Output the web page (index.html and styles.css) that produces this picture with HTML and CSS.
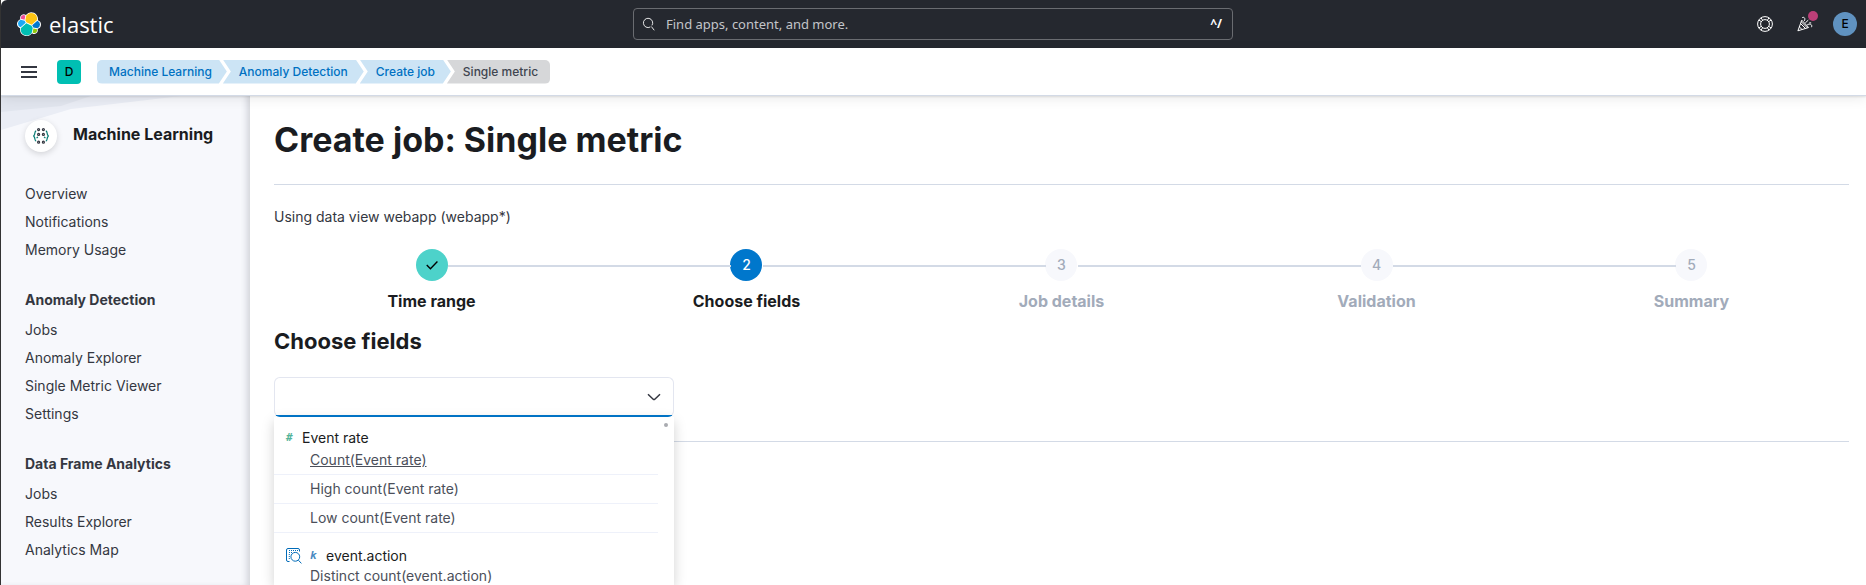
FILE: index.html
```html
<!DOCTYPE html>
<html lang="en">
<head>
<meta charset="utf-8">
<title>Create job: Single metric - Elastic</title>
<link rel="stylesheet" href="styles.css">
</head>
<body>
<header class="topbar">
  <a class="brand" href="#">
    <svg class="brand-mark" viewBox="0 0 32 32" aria-hidden="true">
      <path fill="#fff" d="M32 16.77a6.334 6.334 0 0 0-1.14-3.63 6.269 6.269 0 0 0-3.02-2.3 9.14 9.14 0 0 0-.86-5.65A9.047 9.047 0 0 0 22.73 1.1a9.01 9.01 0 0 0-10.8 3.03 4.81 4.81 0 0 0-5.8-.04 4.85 4.85 0 0 0-1.65 5.6A6.39 6.39 0 0 0 1.36 12 6.392 6.392 0 0 0 1.15 19.3a6.36 6.36 0 0 0 3.04 2.3 9.05 9.05 0 0 0 5.1 9.75 9.05 9.05 0 0 0 10.72-3.03 4.786 4.786 0 0 0 5.78.06 4.85 4.85 0 0 0 1.66-5.58A6.4 6.4 0 0 0 32 16.77z"/>
      <path fill="#FEC514" d="M12.58 13.79l7 3.19 7.07-6.19a7.77 7.77 0 0 0 .15-1.57 7.91 7.91 0 0 0-14.45-4.46l-1.18 6.09z"/>
      <path fill="#00BFB3" d="M5.33 21.22a7.9 7.9 0 0 0 14.5 6.05l1.17-6.07-1.56-2.97-7.03-3.2z"/>
      <path fill="#F04E98" d="M5.29 9.08l4.8 1.14 1.05-5.46a3.79 3.79 0 0 0-5.85 4.32z"/>
      <path fill="#1BA9F5" d="M4.87 10.22a5.36 5.36 0 0 0-.06 10.1l6.74-6.09-1.24-2.64z"/>
      <path fill="#93C90E" d="M20.87 27.27a3.77 3.77 0 0 0 5.83-4.31L21.91 21.84z"/>
      <path fill="#0077CC" d="M21.85 20.56l5.27 1.24a5.36 5.36 0 0 0 .06-10.1l-6.9 6.04z"/>
    </svg>
    <span class="brand-name">elastic</span>
  </a>
  <label class="search">
    <svg class="icon" viewBox="0 0 16 16" aria-hidden="true"><path d="M9.5 11.4A5.3 5.3 0 1 1 11.4 9.6M10.7 10.9l3.3 4.3"/></svg>
    <input type="text" aria-label="Find apps, content, and more." placeholder="Find apps, content, and more.">
    <span class="shortcut">^/</span>
  </label>
  <div class="top-actions">
    <button class="icon-button" type="button" aria-label="Help">
      <svg class="icon" viewBox="0 0 16 16" aria-hidden="true"><circle cx="8" cy="8" r="7.4"/><circle cx="8" cy="8" r="4.4"/><path d="M11.6 10.3l2.5 1.6M10.3 11.6l1.6 2.5M4.4 10.3l-2.5 1.6M5.7 11.6l-1.6 2.5M11.6 5.7l2.5-1.6M10.3 4.4l1.6-2.5M4.4 5.7L1.9 4.1M5.7 4.4L4.1 1.9"/></svg>
    </button>
    <button class="icon-button" type="button" aria-label="News">
      <svg class="icon" viewBox="0 0 16 16" aria-hidden="true"><path d="M4.8 4.2L.9 14.8l10.7-3.3zM3.6 7.6l4.8 4.8M2.4 10.9l2.6 2.6M4.3 5.8l6.1 6.1M5.2 1.6c2-1 3.5.8 2.1 3.3M8.3 6.9l3-2.8M10.2 8.9c2.4-1.7 5.5-.5 4.3 2.3M12.2 6.9h2"/></svg>
      <span class="news-dot"></span>
    </button>
    <button class="avatar" type="button" aria-label="Account">E</button>
  </div>
</header>
<div class="navbar">
  <button class="menu-button" type="button" aria-label="Menu"><span></span><span></span><span></span></button>
  <button class="space" type="button">D</button>
  <nav class="crumbs" aria-label="Breadcrumbs">
    <a class="crumb" href="#">Machine Learning</a>
    <a class="crumb" href="#">Anomaly Detection</a>
    <a class="crumb" href="#">Create job</a>
    <span class="crumb current">Single metric</span>
  </nav>
</div>
<div class="layout">
  <aside class="sidebar">
    <svg class="backdrop" viewBox="0 0 249 36" aria-hidden="true"><path fill="#eaedf5" d="M0 0h180L70 13 0 34z"/><path fill="#e1e5ee" d="M0 0h90L60 10 0 16z"/></svg>
    <div class="solution">
      <span class="solution-icon">
        <svg viewBox="0 0 16 16" aria-hidden="true"><g fill="none" stroke="#007871" stroke-width="1.2"><path d="M3.2 2.8C1.5 3.2 2.2 5.3 1.5 6.6L.7 8l.8 1.4c.7 1.3 0 3.4 1.7 3.8M12.8 2.8c1.7.4 1 2.5 1.7 3.8l.8 1.4-.8 1.4c-.7 1.3 0 3.4-1.7 3.8M3.6 10.2l1.3-1.4M12.4 10.2l-1.3-1.4"/></g><g fill="none" stroke="#343741" stroke-width="1.2"><circle cx="5.6" cy="1.6" r="1"/><circle cx="10.4" cy="1.6" r="1"/><circle cx="5.6" cy="6.4" r="1"/><circle cx="10.4" cy="6.4" r="1"/><circle cx="5.6" cy="14.2" r="1"/><circle cx="10.4" cy="14.2" r="1"/></g></svg>
      </span>
      <h2>Machine Learning</h2>
    </div>
    <nav class="side-nav" aria-label="Machine Learning">
      <section>
        <a href="#">Overview</a>
        <a href="#">Notifications</a>
        <a href="#">Memory Usage</a>
      </section>
      <section>
        <h3>Anomaly Detection</h3>
        <a href="#">Jobs</a>
        <a href="#">Anomaly Explorer</a>
        <a href="#">Single Metric Viewer</a>
        <a href="#">Settings</a>
      </section>
      <section>
        <h3>Data Frame Analytics</h3>
        <a href="#">Jobs</a>
        <a href="#">Results Explorer</a>
        <a href="#">Analytics Map</a>
      </section>
    </nav>
  </aside>
  <main class="content">
    <h1>Create job: Single metric</h1>
    <hr>
    <p class="data-view">Using data view webapp (webapp*)</p>
    <ol class="steps">
      <li class="step done"><button type="button"><span class="dot"><svg viewBox="0 0 16 16" aria-hidden="true"><path d="M2 8l4.2 4.2L14.2 4"/></svg></span>Time range</button></li>
      <li class="step active"><button type="button"><span class="dot">2</span>Choose fields</button></li>
      <li class="step"><button type="button" disabled><span class="dot">3</span>Job details</button></li>
      <li class="step"><button type="button" disabled><span class="dot">4</span>Validation</button></li>
      <li class="step"><button type="button" disabled><span class="dot">5</span>Summary</button></li>
    </ol>
    <h2>Choose fields</h2>
    <div class="combo">
      <div class="combo-box">
        <input type="text" role="combobox" aria-label="Field" aria-expanded="true" aria-controls="field-options">
        <svg viewBox="0 0 16 16" aria-hidden="true"><path d="M2 5.2l5.2 5a1.2 1.2 0 0 0 1.6 0l5.2-5"/></svg>
      </div>
      <div class="options" id="field-options" role="listbox" aria-label="Fields">
        <div class="group"><span class="token number">#</span>Event rate</div>
        <div class="option focused" role="option" aria-selected="true"><span>Count(Event rate)</span></div>
        <div class="option" role="option" aria-selected="false">High count(Event rate)</div>
        <div class="option" role="option" aria-selected="false">Low count(Event rate)</div>
        <div class="group spaced">
          <svg class="inspect" viewBox="0 0 16 16" aria-hidden="true"><path d="M3.5 13.5H2A1.5 1.5 0 0 1 .5 12V2A1.5 1.5 0 0 1 2 .5h10A1.5 1.5 0 0 1 13.5 2v1.5M12.4 12.2l3 3.2"/><circle cx="9.3" cy="8.8" r="4.4"/><path class="dots" d="M3 2.5h9M3 4.5h4M2.8 6.5h2M2.8 8.5h1M2.8 10.5h2"/></svg>
          <span class="token keyword">k</span>event.action
        </div>
        <div class="option" role="option" aria-selected="false">Distinct count(event.action)</div>
      </div>
      <span class="scroll-dot"></span>
    </div>
    <hr class="form-end">
  </main>
</div>
</body>
</html>
```
FILE: styles.css
```css
* { box-sizing: border-box; }
html, body { height: 100%; }
body {
  margin: 0;
  display: flex;
  flex-direction: column;
  overflow: hidden;
  border-left: 1px solid #333;
  background: #fff;
  color: #343741;
  font: 14px/20px Inter, sans-serif;
}
button, input { font: inherit; color: inherit; border: 0; padding: 0; background: none; }
a { color: inherit; text-decoration: none; }
h1, h2, h3, p, ol { margin: 0; padding: 0; }

.topbar {
  flex: none;
  display: grid;
  grid-template-columns: 1fr minmax(200px, 600px) 1fr;
  align-items: center;
  height: 48px;
  padding: 0 9px 0 16px;
  border-top-left-radius: 6px;
  background: #25282f;
  color: #fff;
}
.brand { display: flex; align-items: center; gap: 8px; }
.brand-mark { width: 24px; height: 24px; }
.brand-name { font: 400 22px/28px "Open Sans", sans-serif; }
.search {
  display: flex;
  align-items: center;
  gap: 10px;
  height: 32px;
  margin: 0 4px 0 -4px;
  padding: 0 10px 0 8px;
  border: 1px solid #6a6c71;
  border-radius: 4px;
  font-family: "Noto Sans", sans-serif;
  font-size: 13px;
}
.search input { flex: 1; min-width: 0; outline: 0; }
.search input::placeholder { color: #c3c5c9; opacity: 1; }
.shortcut { font-size: 12px; font-weight: 700; }
.icon { display: block; width: 16px; height: 16px; fill: none; stroke: currentColor; }
.search .icon { width: 14px; height: 14px; }
.top-actions { display: flex; justify-content: flex-end; align-items: center; }
.icon-button { position: relative; display: grid; place-items: center; width: 40px; height: 40px; }
.news-dot { position: absolute; top: 7px; right: 7px; width: 10px; height: 10px; border-radius: 50%; background: #bc3f78; }
.avatar { width: 24px; height: 24px; margin-left: 8px; border-radius: 50%; background: #6092c0; color: #000; font-size: 12px; font-weight: 500; }

.navbar {
  position: relative;
  z-index: 2;
  flex: none;
  display: flex;
  align-items: center;
  height: 48px;
  padding-left: 20px;
  border-bottom: 1px solid #d3dae6;
  background: #fff;
  box-shadow: 0 1px 2px rgba(0,0,0,.1), 0 3px 12px rgba(0,0,0,.08);
}
.menu-button { display: grid; gap: 3px; width: 16px; margin-right: 20px; }
.menu-button span { height: 2px; background: #343741; }
.space { width: 24px; height: 24px; margin-right: 16px; border-radius: 4px; background: #00bfb3; color: #000; font-size: 12px; font-weight: 500; }
.crumbs { display: flex; }
.crumb {
  height: 24px;
  margin-right: -4px;
  padding: 0 16px;
  background: #cce4f5;
  color: #0071c2;
  font-size: 12px;
  font-weight: 500;
  line-height: 24px;
  clip-path: polygon(0 0, calc(100% - 8px) 0, 100% 50%, calc(100% - 8px) 100%, 0 100%, 8px 50%);
}
.crumb:first-child { padding: 0 15px 0 12px; border-radius: 5px 0 0 5px; clip-path: polygon(0 0, calc(100% - 8px) 0, 100% 50%, calc(100% - 8px) 100%, 0 100%); }
.crumb.current { padding-right: 12px; border-radius: 0 5px 5px 0; background: #d6d7d9; color: #404550; clip-path: polygon(0 0, 100% 0, 100% 100%, 0 100%, 8px 50%); }

.layout { flex: 1; min-height: 0; display: flex; }
.sidebar {
  position: relative;
  flex: none;
  width: 249px;
  padding: 24px 24px 0;
  background: #f7f8fc;
  box-shadow: inset -6px 0 6px -3px rgba(60,65,80,.2);
}
.backdrop { position: absolute; top: 0; left: 0; width: 100%; }
.solution { position: relative; display: flex; align-items: flex-start; gap: 16px; height: 32px; }
.solution-icon { display: grid; place-items: center; width: 32px; height: 32px; border-radius: 50%; background: #fff; box-shadow: 0 2px 6px rgba(0,0,0,.15); }
.solution-icon svg { width: 16px; height: 16px; }
.solution h2 { font-size: 16px; font-weight: 700; line-height: 28px; color: #1a1c21; }
.side-nav { display: grid; gap: 22px; margin-top: 28px; }
.side-nav section { display: grid; }
.side-nav a { height: 28px; line-height: 28px; }
.side-nav h3 { height: 30px; font-size: 14px; font-weight: 700; line-height: 28px; }

.content { flex: 1; min-width: 0; padding: 24px 17px 0 24px; }
h1 { color: #1a1c21; font-size: 34px; font-weight: 700; line-height: 40px; }
hr { height: 1px; margin: 24px 0 22px; border: 0; background: #d3dae6; }
.data-view { line-height: 20px; }
.steps { display: grid; grid-template-columns: repeat(5, 1fr); margin-top: 22px; list-style: none; }
.step { position: relative; text-align: center; }
.step + .step::before {
  content: "";
  position: absolute;
  top: 16px;
  right: calc(50% + 16px);
  width: calc(100% - 32px);
  height: 2px;
  background: #d3dae6;
}
.step button { display: inline-grid; justify-items: center; gap: 8px; color: #a2abba; font-size: 16px; font-weight: 700; line-height: 24px; }
.dot { display: grid; place-items: center; width: 32px; height: 32px; border-radius: 50%; background: #f7f8fc; font-size: 14px; font-weight: 500; }
.dot svg { width: 14px; height: 14px; fill: none; stroke: #000; stroke-width: 1.6; }
.step.done button, .step.active button { color: #1a1c21; }
.step.done .dot { background: #4dd2ca; }
.step.active .dot { background: #0077cc; color: #fff; }
.content h2 { margin: 12px 0 20px; color: #1a1c21; font-size: 22px; font-weight: 700; line-height: 32px; }
.combo { position: relative; width: 400px; max-width: 100%; }
.combo-box {
  display: flex;
  align-items: center;
  height: 40px;
  padding: 0 11px 0 12px;
  border: 1px solid #e3e6f0;
  border-radius: 6px;
  background: linear-gradient(#0077cc, #0077cc) bottom / 100% 2px no-repeat border-box, #fff;
  border-bottom-color: transparent;
}
.combo-box input { flex: 1; min-width: 0; height: 36px; outline: 0; }
.combo-box svg { width: 16px; height: 16px; fill: none; stroke: #343741; stroke-width: 1.5; }
.options {
  position: absolute;
  z-index: 1;
  top: 100%;
  left: 0;
  width: 100%;
  height: 168px;
  padding: 10px 16px 0 0;
  overflow: hidden;
  background: #fff;
  box-shadow: 0 4px 12px rgba(0,0,0,.18);
}
.scroll-dot { position: absolute; z-index: 2; top: 46px; right: 6px; width: 4px; height: 4px; border-radius: 50%; background: #a9abb0; }
.group { display: flex; align-items: center; height: 22px; padding-left: 12px; color: #1a1c21; }
.group.spaced { height: 21px; margin-top: 12px; }
.token { width: 16px; font: italic 700 11px/16px "DejaVu Sans Mono", monospace; }
.number { color: #54b399; }
.keyword { width: 16px; margin-left: 8px; color: #4a8bc2; }
.option { height: 29px; padding: 4px 0 4px 36px; border-bottom: 1px solid #eef1fa; color: #4b4f5a; }
.option.focused { height: 26px; padding-top: 1px; }
.group.spaced + .option { padding-top: 0; }
.option.focused span { text-decoration: underline; }
.inspect { width: 16px; height: 16px; fill: none; stroke: #006bb8; }
.dots { stroke-dasharray: 1 1; }
.form-end { margin: 24px 0 0; }
```
